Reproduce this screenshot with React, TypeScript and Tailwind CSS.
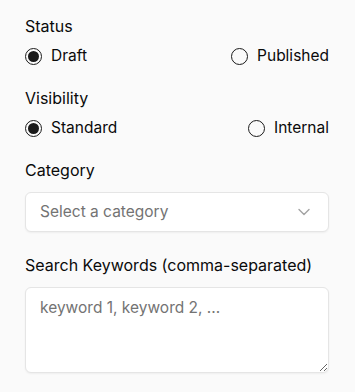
import { useState } from 'react';

function Radio({ checked, label, onClick }: { checked: boolean; label: string; onClick: () => void }) {
  return (
    <button type="button" onClick={onClick} className="flex items-center gap-[9px] h-5">
      <span className="w-[17px] h-[17px] rounded-full border-[1.5px] border-[#1a1a1a] flex items-center justify-center">
        {checked && <span className="w-[11px] h-[11px] rounded-full bg-[#1a1a1a]" />}
      </span>
      <span className="text-[15.5px] text-[#0a0a0a]">{label}</span>
    </button>
  );
}

export default function App() {
  const [status, setStatus] = useState('draft');
  const [visibility, setVisibility] = useState('standard');

  return (
    <div className="min-h-screen bg-[#fafafa] px-[25px] pt-[16px] font-['Inter',sans-serif]">
      <div className="flex flex-col w-[304px]">
        {/* Status */}
        <label className="text-[16px] leading-5 text-[#0a0a0a]">Status</label>
        <div className="mt-[10px] flex justify-between">
          <Radio checked={status === 'draft'} label="Draft" onClick={() => setStatus('draft')} />
          <Radio checked={status === 'published'} label="Published" onClick={() => setStatus('published')} />
        </div>

        {/* Visibility */}
        <label className="mt-[22px] text-[16px] leading-5 text-[#0a0a0a]">Visibility</label>
        <div className="mt-[10px] flex justify-between">
          <Radio checked={visibility === 'standard'} label="Standard" onClick={() => setVisibility('standard')} />
          <Radio checked={visibility === 'internal'} label="Internal" onClick={() => setVisibility('internal')} />
        </div>

        {/* Category */}
        <label className="mt-[22px] text-[16px] leading-5 text-[#0a0a0a]">Category</label>
        <button
          type="button"
          className="mt-[12px] h-[40px] flex items-center justify-between rounded-md border border-[#e5e5e5] bg-white px-[14px] shadow-[0_1px_2px_rgba(0,0,0,0.05)]"
        >
          <span className="text-[15.5px] text-[#737373]">Select a category</span>
          <svg width="12" height="8" viewBox="0 0 12 8" fill="none" className="mr-[4px]">
            <path d="M1 1.5l5 5 5-5" stroke="#a3a3a3" strokeWidth="1.4" strokeLinecap="round" strokeLinejoin="round" />
          </svg>
        </button>

        {/* Keywords */}
        <label className="mt-[23px] text-[16px] leading-5 text-[#0a0a0a]">Search Keywords (comma-separated)</label>
        <textarea
          placeholder="keyword 1, keyword 2, ..."
          className="mt-[12px] h-[86px] rounded-md border border-[#e5e5e5] bg-white px-[14px] py-[10px] text-[15.5px] leading-5 placeholder:text-[#737373] shadow-[0_1px_2px_rgba(0,0,0,0.05)] outline-none"
        />
      </div>
    </div>
  );
}
